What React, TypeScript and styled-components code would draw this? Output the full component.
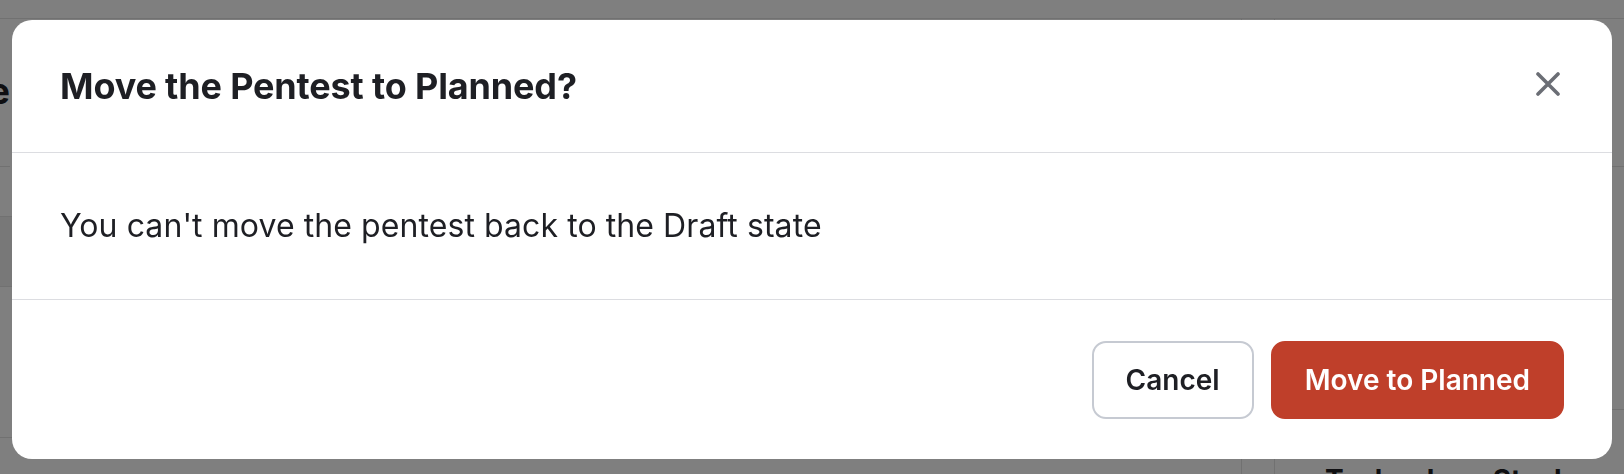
import React from "react";
import styled, { createGlobalStyle } from "styled-components";

const GlobalStyle = createGlobalStyle`
  html, body { margin: 0; padding: 0; }
  body {
    width: 1624px;
    height: 474px;
    overflow: hidden;
    font-family: Inter, "Noto Sans", "Liberation Sans", sans-serif;
    background: #ffffff;
  }
  * { box-sizing: border-box; }
`;

/* ---------- page behind the dialog ---------- */

const Page = styled.div`
  width: 1624px;
  height: 474px;
  display: flex;
  flex-direction: column;
  background: #ffffff;
  overflow: hidden;
`;

const TopBar = styled.div`
  height: 19px;
  flex: none;
  background: #ffffff;
  border-bottom: 1px solid #e2e2e2;
`;

const PageBody = styled.div`
  flex: 1;
  display: grid;
  grid-template-columns: 1241px 34px 1fr;
`;

const MainColumn = styled.div`
  display: flex;
  flex-direction: column;
`;

const HeadingClip = styled.div`
  width: 10px;
  height: 148px;
  overflow: hidden;
  display: flex;
  justify-content: flex-end;
  padding-top: 52px;
  border-bottom: 1px solid #e2e2e2;
`;

const PageHeading = styled.h1`
  margin: 0;
  font-size: 36px;
  font-weight: 700;
  color: #1e1f24;
  white-space: nowrap;
  line-height: 40px;
`;

const Row = styled.div<{ $h: number; $shade?: boolean }>`
  height: ${(p) => p.$h}px;
  flex: none;
  background: ${(p) => (p.$shade ? "#f0f0f1" : "#ffffff")};
  border-bottom: 1px solid #e2e2e2;
`;

const Gutter = styled.div`
  border-left: 1px solid #e2e2e2;
  border-right: 1px solid #e2e2e2;
`;

const SideColumn = styled.div`
  display: flex;
  flex-direction: column;
`;

const SideBlock = styled.div<{ $h: number }>`
  height: ${(p) => p.$h}px;
  flex: none;
  border-bottom: 1px solid #e2e2e2;
`;

const SideHeading = styled.h2`
  margin: 0;
  padding: 52px 0 0 50px;
  font-size: 28px;
  font-weight: 700;
  line-height: 36px;
  color: #1e1f24;
  white-space: nowrap;
`;

/* ---------- dialog ---------- */

const Overlay = styled.div`
  position: fixed;
  inset: 0;
  background: rgba(0, 0, 0, 0.5);
  padding: 20px 12px 15px 12px;
  display: flex;
  align-items: flex-start;
  justify-content: center;
`;

const Dialog = styled.div`
  width: 1600px;
  height: 439px;
  background: #ffffff;
  border-radius: 20px;
  display: flex;
  flex-direction: column;
  overflow: hidden;
`;

const DialogHeader = styled.div`
  height: 133px;
  flex: none;
  display: flex;
  align-items: center;
  justify-content: space-between;
  padding: 0 52px 0 48px;
  border-bottom: 1px solid #dcdde1;
`;

const Title = styled.h2`
  margin: 0;
  font-size: 36px;
  font-weight: 700;
  line-height: 44px;
  color: #1e1f24;
  letter-spacing: -0.15px;
`;

const CloseButton = styled.button`
  width: 24px;
  height: 24px;
  padding: 0;
  margin-top: -4px;
  border: none;
  background: transparent;
  color: #6b6e75;
  cursor: pointer;
  display: flex;
  align-items: center;
  justify-content: center;
`;

const DialogBody = styled.div`
  height: 147px;
  flex: none;
  display: flex;
  align-items: center;
  padding: 0 48px;
  border-bottom: 1px solid #dcdde1;
`;

const Message = styled.p`
  margin: 0;
  font-size: 32px;
  font-weight: 400;
  line-height: 40px;
  letter-spacing: 0.08px;
  color: #1e1f24;
`;

const DialogFooter = styled.div`
  flex: 1;
  display: flex;
  align-items: center;
  justify-content: flex-end;
  gap: 17px;
  padding: 0 48px 0 48px;
`;

const Button = styled.button<{ $variant: "secondary" | "danger" }>`
  height: 78px;
  padding: 0 32px;
  border-radius: 14px;
  font-family: Inter, "Noto Sans", "Liberation Sans", sans-serif;
  font-size: 28px;
  font-weight: 600;
  cursor: pointer;
  border: 2px solid ${(p) => (p.$variant === "danger" ? "#bf3f2a" : "#c6cad2")};
  background: ${(p) => (p.$variant === "danger" ? "#bf3f2a" : "#ffffff")};
  color: ${(p) => (p.$variant === "danger" ? "#ffffff" : "#1e1f24")};
`;

const CloseIcon = () => (
  <svg width="24" height="24" viewBox="0 0 24 24" fill="none">
    <path
      d="M2 2 L22 22 M22 2 L2 22"
      stroke="currentColor"
      strokeWidth="3.6"
      strokeLinecap="round"
    />
  </svg>
);

export default function App() {
  return (
    <>
      <GlobalStyle />
      <Page>
        <TopBar />
        <PageBody>
          <MainColumn>
            <HeadingClip>
              <PageHeading>Pentest Scope</PageHeading>
            </HeadingClip>
            <Row $h={50} />
            <Row $h={70} $shade />
            <Row $h={151} />
          </MainColumn>
          <Gutter />
          <SideColumn>
            <SideBlock $h={148} />
            <SideBlock $h={243} />
            <SideHeading>Technology Stack</SideHeading>
          </SideColumn>
        </PageBody>
      </Page>
      <Overlay>
        <Dialog role="dialog" aria-modal="true">
          <DialogHeader>
            <Title>Move the Pentest to Planned?</Title>
            <CloseButton aria-label="Close">
              <CloseIcon />
            </CloseButton>
          </DialogHeader>
          <DialogBody>
            <Message>You can't move the pentest back to the Draft state</Message>
          </DialogBody>
          <DialogFooter>
            <Button $variant="secondary">Cancel</Button>
            <Button $variant="danger">Move to Planned</Button>
          </DialogFooter>
        </Dialog>
      </Overlay>
    </>
  );
}
